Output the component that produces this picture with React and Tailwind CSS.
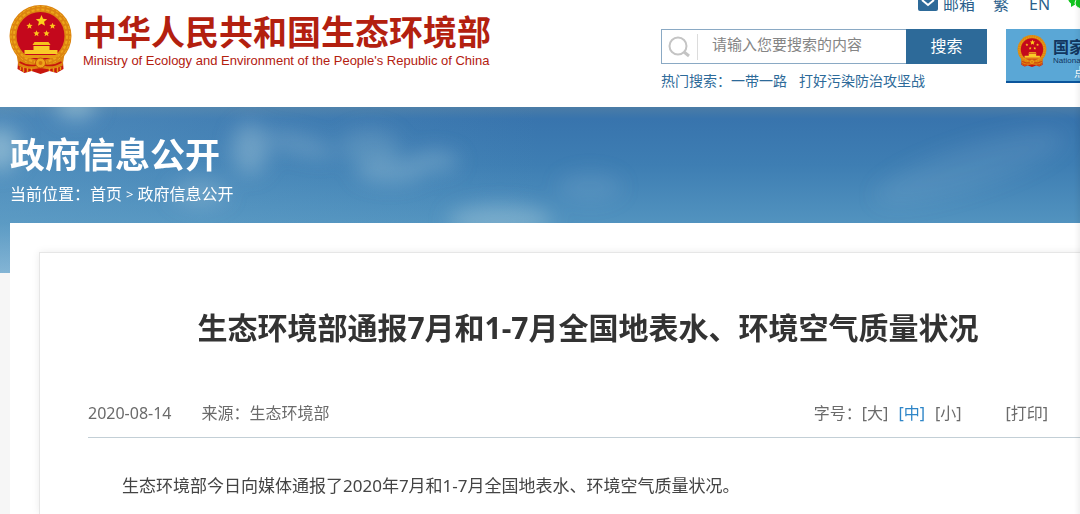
import { useState } from "react";

const star = (cx, cy, r) =>
    Array.from({ length: 10 }, (_, i) => {
        const radius = i % 2 ? r * 0.45 : r;
        const angle = (Math.PI / 5) * i - Math.PI / 2;
        return `${cx + radius * Math.cos(angle)},${cy + radius * Math.sin(angle)}`;
    }).join(" ");

function Emblem({ className }) {
    return (
        <svg className={className} viewBox="0 0 62 69" aria-hidden="true">
            <path d="M9 50 L8 64 L15 68 L22 66 L31 69 L40 66 L47 68 L54 64 L53 50 Z" fill="#c8150c" />
            <circle cx="31" cy="31" r="31" fill="#dc8410" />
            <circle cx="31" cy="31" r="29.5" fill="none" stroke="#f0b020" strokeWidth="1" strokeDasharray="3 2" />
            <circle cx="31" cy="31" r="26.5" fill="none" stroke="#eea51a" strokeWidth="2" strokeDasharray="3 2" />
            <circle cx="31" cy="31" r="24" fill="#c4081c" />
            <polygon points={star(32, 16, 6)} fill="#fcd01c" />
            <polygon points={star(20, 21, 3.3)} fill="#fcc41c" />
            <polygon points={star(43, 21, 3.3)} fill="#fcc41c" />
            <polygon points={star(27, 28.5, 3.3)} fill="#fcc41c" />
            <polygon points={star(37, 28.5, 3.3)} fill="#fcc41c" />
            <path d="M25 37 H39 L41 40 H23 Z" fill="#f6c31c" />
            <path d="M24 41 H40 V45 H48 V49 H15 V45 H24 Z" fill="#f9cb28" />
            <path d="M12 50 H50 L46 53 H16 Z" fill="#e89a14" />
            <path d="M7 49 Q14 59 26 59 Q28 53 31 53 Q34 53 36 59 Q48 59 55 49 L53 61 Q42 66 31 63 Q20 66 9 61 Z" fill="#dc8410" />
            <path d="M10 57 Q18 62 27 60 M52 57 Q44 62 35 60" fill="none" stroke="#c8150c" strokeWidth="1.5" />
            <circle cx="31" cy="58" r="5" fill="#eea51a" stroke="#c9530b" strokeWidth="1" />
            <circle cx="31" cy="58" r="2" fill="#d9720c" />
            <path d="M11 62 V65 M14 62 V67 M18 63 V67 M22 63 V66 M40 63 V66 M44 63 V67 M48 62 V67 M51 62 V65" stroke="#e89a14" strokeWidth="1.5" />
        </svg>
    );
}

function Sky() {
    return (
        <svg className="absolute inset-x-0 top-0 w-full h-[166px]" viewBox="0 0 1080 166" preserveAspectRatio="none" aria-hidden="true">
            <defs>
                <linearGradient id="sky" x1="0" y1="0" x2="0" y2="1">
                    <stop offset="0" stopColor="#4b7ca6" />
                    <stop offset="0.07" stopColor="#3874ad" />
                    <stop offset="0.35" stopColor="#3e7eb3" />
                    <stop offset="0.7" stopColor="#5293bf" />
                    <stop offset="1" stopColor="#94bedb" />
                </linearGradient>
                <linearGradient id="haze" x1="0" y1="0" x2="1" y2="0">
                    <stop offset="0" stopColor="#6aa6cb" stopOpacity="0.4" />
                    <stop offset="0.5" stopColor="#6aa6cb" stopOpacity="0" />
                </linearGradient>
                <filter id="soft" x="-50%" y="-100%" width="200%" height="300%">
                    <feGaussianBlur stdDeviation="10" />
                </filter>
            </defs>
            <rect width="1080" height="166" fill="url(#sky)" />
            <rect width="1080" height="166" fill="url(#haze)" />
            <g filter="url(#soft)" fill="#a9cbdc">
                <ellipse cx="76" cy="0" rx="20" ry="12" opacity="0.6" />
                <ellipse cx="0" cy="42" rx="20" ry="22" opacity="0.6" />
                <ellipse cx="250" cy="42" rx="18" ry="26" opacity="0.4" />
                <ellipse cx="300" cy="38" rx="36" ry="9" opacity="0.3" transform="rotate(14 300 38)" />
                <ellipse cx="370" cy="40" rx="30" ry="18" opacity="0.22" />
                <ellipse cx="390" cy="64" rx="34" ry="12" opacity="0.35" />
                <ellipse cx="435" cy="54" rx="24" ry="10" opacity="0.35" />
                <ellipse cx="200" cy="86" rx="28" ry="14" opacity="0.3" />
                <ellipse cx="500" cy="114" rx="52" ry="16" opacity="0.45" />
                <ellipse cx="590" cy="80" rx="32" ry="14" opacity="0.15" />
                <ellipse cx="970" cy="60" rx="100" ry="22" opacity="0.12" transform="rotate(-18 970 60)" />
            </g>
        </svg>
    );
}

function Header() {
    return (
        <header className="flex h-[107px] justify-between overflow-hidden bg-white">
            <a href="#" className="flex items-start pl-[9px] pt-[5px] shrink-0">
                <Emblem className="w-[63px] h-[69px]" />
                <span className="pl-[11px] text-[#b3200f]">
                    <span className="block text-[34px] leading-[54px] font-bold whitespace-nowrap">中华人民共和国生态环境部</span>
                    <span className="-mt-1.5 block font-['Liberation_Sans',sans-serif] text-[13px] leading-4 whitespace-nowrap">
                        Ministry of Ecology and Environment of the People's Republic of China
                    </span>
                </span>
            </a>

            <div className="w-[419px] shrink-0 text-[#2d6a99]">
                <nav className="flex h-[29px] pl-[257px] items-start text-base leading-6 text-[#2b5f8c] whitespace-nowrap">
                    <a href="#" className="-mt-2 flex shrink-0 items-center gap-1">
                        <svg width="21" height="16" viewBox="0 0 21 16" aria-hidden="true">
                            <rect width="20" height="15" rx="2" fill="#2d6a99" />
                            <path d="M4 4 L10 9 L16 4" fill="none" stroke="#fff" strokeWidth="2" />
                        </svg>
                        邮箱
                    </a>
                    <a href="#" className="-mt-2 ml-[18px] shrink-0">繁</a>
                    <a href="#" className="-mt-2 ml-5 shrink-0">EN</a>
                    <a href="#" className="-mt-2 ml-[18px] shrink-0" aria-label="微信">
                        <svg width="24" height="20" viewBox="0 0 24 20" aria-hidden="true">
                            <ellipse cx="8" cy="6" rx="8" ry="7" fill="#12c41e" />
                            <path d="M3 10 L3 15 L8 12 Z" fill="#12c41e" />
                            <ellipse cx="15" cy="11" rx="8" ry="6" fill="#12c41e" stroke="#fff" strokeWidth="1" />
                        </svg>
                    </a>
                </nav>
                <div className="flex items-start gap-[19px]">
                    <div className="shrink-0">
                        <form className="flex h-[35px] w-[326px]" onSubmit={(e) => e.preventDefault()}>
                            <label htmlFor="searchTerm" aria-label="搜索" className="flex w-[37px] items-center border border-r-0 border-[#8aa9c4] pl-[6px]">
                                <svg width="22" height="22" viewBox="0 0 22 22" fill="none" stroke="#c4c4c4" strokeWidth="2" aria-hidden="true">
                                    <circle cx="10" cy="10" r="8.5" />
                                    <path d="M16 16 L21 20" strokeWidth="3" />
                                </svg>
                                <span className="ml-[7px] h-[26px] w-px shrink-0 bg-[#dcdcdc]"></span>
                            </label>
                            <input
                                id="searchTerm"
                                type="text"
                                name="searchTerm"
                                placeholder="请输入您要搜索的内容"
                                className="w-[208px] border border-x-0 border-[#8aa9c4] pl-[14px] pb-1 text-[15px] text-gray-700 outline-none placeholder:text-[#858585]"
                            />
                            <button className="flex-1 cursor-pointer bg-[#2d6a99] pb-0.5 text-base text-white">搜索</button>
                        </form>
                        <div className="mt-[5px] flex text-[14px] leading-6 whitespace-nowrap">
                            <span>热门搜索：</span>
                            <a href="#" className="hover:underline">一带一路</a>
                            <a href="#" className="ml-3 hover:underline">打好污染防治攻坚战</a>
                        </div>
                    </div>
                    <a href="#" className="flex h-[54px] w-[220px] shrink-0 border-b-2 border-[#0b559c] bg-[#5aa7d6] pl-[11px] pt-1.5 text-[#12365f]">
                        <Emblem className="h-[32px] w-[30px] shrink-0" />
                        <span className="pl-1.5 whitespace-nowrap">
                            <span className="block text-base leading-6 font-bold">国家</span>
                            <span className="-mt-0.5 block font-['Liberation_Sans',sans-serif] text-[8px] leading-2">National N</span>
                            <span className="block pl-[21px] text-[12px] leading-4 text-white">点</span>
                        </span>
                    </a>
                </div>
            </div>
        </header>
    );
}

function ArticleMeta() {
    const [size, setSize] = useState("中");

    return (
        <div className="flex justify-between border-b border-[#c3cfd6] pb-3 text-base leading-6 text-[#6b6b6b] whitespace-nowrap">
            <div className="flex gap-[30px]">
                <time dateTime="2020-08-14">2020-08-14</time>
                <span>来源：生态环境部</span>
            </div>
            <div className="flex pr-10">
                <span>字号：</span>
                <div className="flex gap-2.5">
                    {["大", "中", "小"].map((item) => (
                        <button
                            key={item}
                            onClick={() => setSize(item)}
                            className={size === item ? "cursor-pointer text-[#2f86c8]" : "cursor-pointer"}
                        >
                            [{item}]
                        </button>
                    ))}
                </div>
                <button className="ml-11 cursor-pointer">[打印]</button>
            </div>
        </div>
    );
}

function App() {
    return (
        <div className="relative min-h-screen overflow-hidden bg-[#f6f6f6] font-['Noto_Sans','Noto_Sans_CJK_SC',sans-serif]">
            <Header />
            <main className="relative">
                <Sky />
                <div className="relative pl-[10px]">
                    <div className="h-[116px] pt-7 text-white">
                        <h2 className="text-[35px] leading-10 font-bold">政府信息公开</h2>
                        <nav className="mt-[7px] flex gap-1 text-base leading-6">
                            <span>当前位置：<a href="#">首页</a></span>
                            <span className="text-[13px]">&gt;</span>
                            <a href="#">政府信息公开</a>
                        </nav>
                    </div>
                    {/* the sheet runs past the right side of narrow windows */}
                    <div className="-mr-[86px] bg-white px-[29px] pt-[29px]">
                        <article className="min-h-[262px] border border-b-0 border-[#e6e6e6] px-12 pt-[51px] shadow-[0_0_8px_rgba(0,0,0,0.08)]">
                            <h1 className="text-center text-[30px] leading-12 font-bold text-[#333]">
                                生态环境部通报7月和1-7月全国地表水、环境空气质量状况
                            </h1>
                            <div className="mt-[49px]">
                                <ArticleMeta />
                            </div>
                            <p className="mt-8 indent-[2em] text-[17px] leading-8 text-[#444]">
                                生态环境部今日向媒体通报了2020年7月和1-7月全国地表水、环境空气质量状况。
                            </p>
                        </article>
                    </div>
                </div>
            </main>
            <div className="pointer-events-none absolute inset-y-0 right-0 w-1.5 bg-linear-to-r from-transparent to-black/5"></div>
        </div>
    );
}

export default App;
